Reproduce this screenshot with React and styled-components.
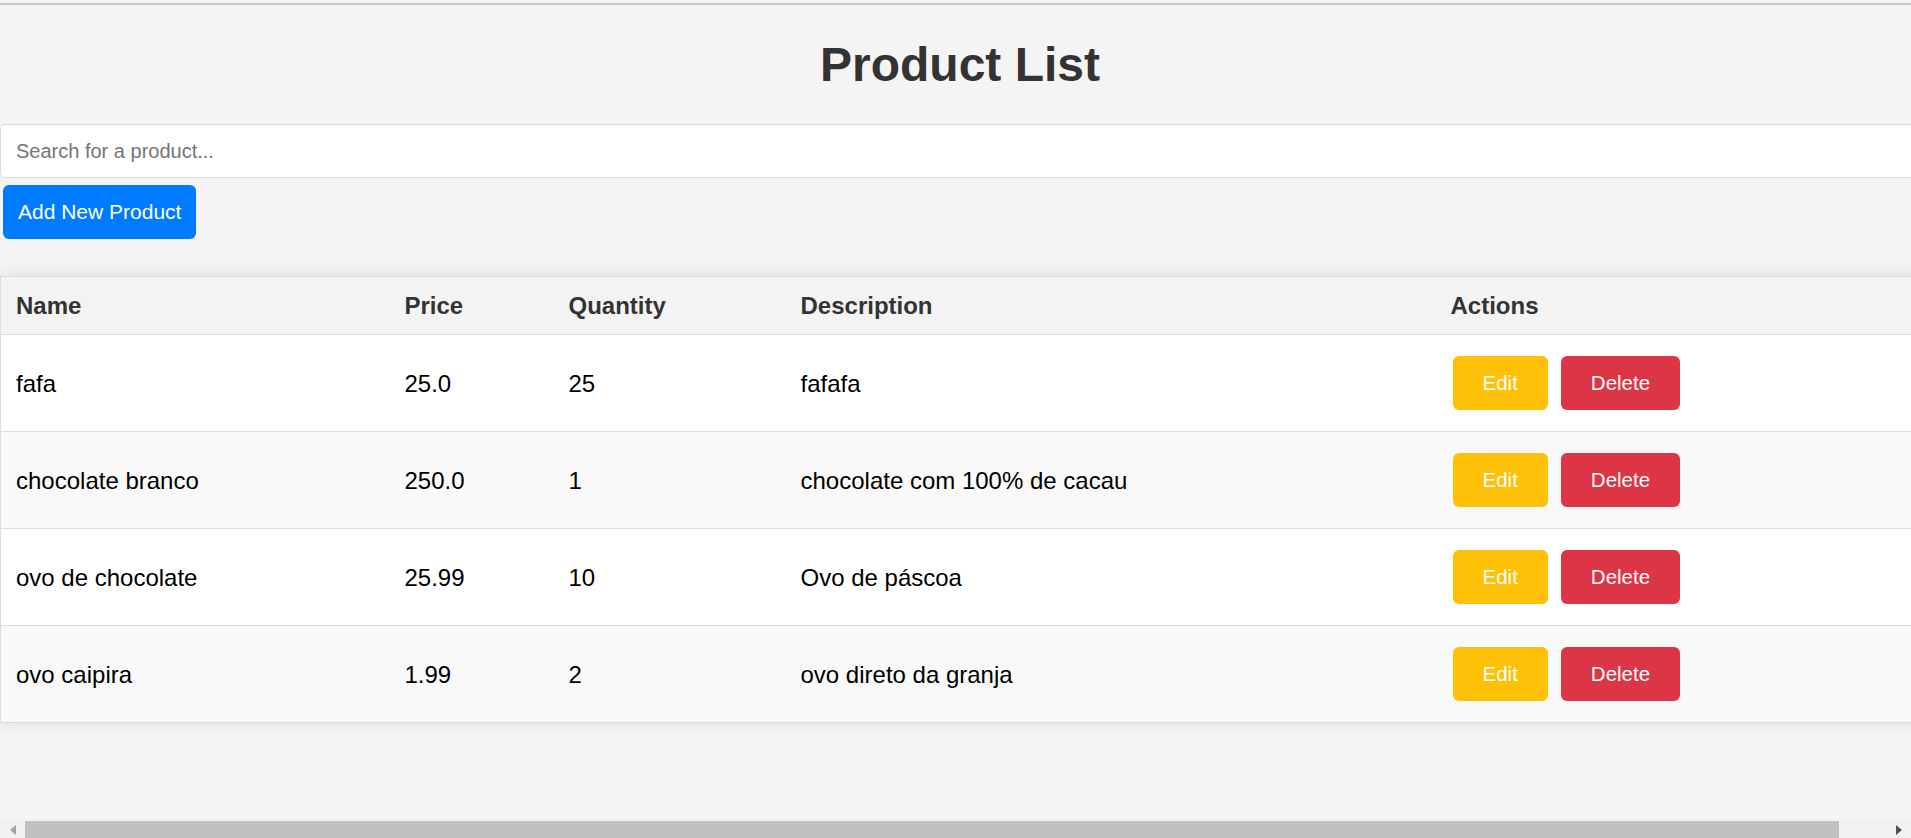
import React from "react";
import styled, { createGlobalStyle } from "styled-components";

const GlobalStyle = createGlobalStyle`
  html, body {
    margin: 0;
    padding: 0;
    overflow: hidden;
    background-color: #f4f4f4;
    font-family: "Liberation Sans", Arial, sans-serif;
  }
`;

const Page = styled.div`
  width: 1920px;
  min-height: 838px;
  margin-top: 3px;
  border-top: 2px solid #c6c6c6;
  background-color: #f4f4f4;
`;

const Title = styled.h1`
  margin: 32px 0;
  font-size: 48px;
  line-height: 55px;
  font-weight: bold;
  color: #333;
  text-align: center;
`;

const Search = styled.input`
  display: block;
  box-sizing: border-box;
  width: 1952px;
  height: 54px;
  margin: 0;
  padding: 0 15px;
  border: 1px solid #dcdcdc;
  border-radius: 6px;
  background-color: #fff;
  font-family: "Liberation Sans", Arial, sans-serif;
  font-size: 20px;
  color: #222;
  outline: none;

  &::placeholder {
    color: #757575;
  }
`;

const AddButton = styled.button`
  display: block;
  box-sizing: border-box;
  height: 54px;
  margin: 7px 0 0 3px;
  padding: 0 15px;
  border: none;
  border-radius: 6px;
  background-color: #007bff;
  color: #fff;
  font-family: "Liberation Sans", Arial, sans-serif;
  font-size: 21px;
  cursor: pointer;
`;

const Table = styled.table`
  width: 1978px;
  margin-top: 37px;
  table-layout: fixed;
  border-collapse: collapse;
  border: 1px solid #dcdcdc;
  background-color: #fff;
  box-shadow: 0 0 15px rgba(0, 0, 0, 0.1);
`;

const Col = styled.col`
  width: ${(p) => p.$w}px;
`;

const Th = styled.th`
  padding: 15px;
  text-align: left;
  font-size: 24px;
  line-height: 27px;
  font-weight: bold;
  color: #333;
  background-color: #f3f3f3;
  border-bottom: 1px solid #dcdcdc;
`;

const Row = styled.tr`
  background-color: ${(p) => (p.$even ? "#f9f9f9" : "#fff")};
  border-bottom: 1px solid #dcdcdc;
`;

const Td = styled.td`
  padding: 15px;
  font-size: 24px;
  line-height: 27px;
  color: #000;
  vertical-align: middle;
`;

const Actions = styled.div`
  display: flex;
  gap: 13px;
  padding: 6px 0 6px 2px;
`;

const ActionButton = styled.button`
  box-sizing: border-box;
  height: 54px;
  padding: 0 30px;
  border: none;
  border-radius: 6px;
  background-color: ${(p) => (p.$danger ? "#dc3545" : "#ffc107")};
  color: #fff;
  font-family: "Liberation Sans", Arial, sans-serif;
  font-size: 20.5px;
  cursor: pointer;
`;

const Scrollbar = styled.div`
  position: fixed;
  left: 0;
  right: 0;
  bottom: 0;
  height: 19px;
  display: flex;
  align-items: flex-end;
  background-color: #f1f1f1;
`;

const Arrow = styled.div`
  width: 25px;
  height: 17px;
  display: flex;
  align-items: center;
  justify-content: center;
`;

const Track = styled.div`
  flex: 1;
  height: 17px;
  display: flex;
`;

const Thumb = styled.div`
  width: 1814px;
  height: 17px;
  background-color: #c1c1c1;
`;

const products = [
  { name: "fafa", price: "25.0", quantity: 25, description: "fafafa" },
  { name: "chocolate branco", price: "250.0", quantity: 1, description: "chocolate com 100% de cacau" },
  { name: "ovo de chocolate", price: "25.99", quantity: 10, description: "Ovo de páscoa" },
  { name: "ovo caipira", price: "1.99", quantity: 2, description: "ovo direto da granja" },
];

const App = () => (
  <Page>
    <GlobalStyle />
    <Title>Product List</Title>
    <Search type="text" placeholder="Search for a product..." />
    <AddButton>Add New Product</AddButton>
    <Table>
      <colgroup>
        <Col $w={389} />
        <Col $w={164} />
        <Col $w={232} />
        <Col $w={650} />
        <Col $w={543} />
      </colgroup>
      <thead>
        <tr>
          <Th>Name</Th>
          <Th>Price</Th>
          <Th>Quantity</Th>
          <Th>Description</Th>
          <Th>Actions</Th>
        </tr>
      </thead>
      <tbody>
        {products.map((p, i) => (
          <Row key={p.name} $even={i % 2 === 1}>
            <Td>{p.name}</Td>
            <Td>{p.price}</Td>
            <Td>{p.quantity}</Td>
            <Td>{p.description}</Td>
            <Td>
              <Actions>
                <ActionButton>Edit</ActionButton>
                <ActionButton $danger>Delete</ActionButton>
              </Actions>
            </Td>
          </Row>
        ))}
      </tbody>
    </Table>
    <Scrollbar>
      <Arrow>
        <svg width="6" height="10" viewBox="0 0 6 10">
          <path d="M6 0 L0 5 L6 10 Z" fill="#a3a3a3" />
        </svg>
      </Arrow>
      <Track>
        <Thumb />
      </Track>
      <Arrow>
        <svg width="6" height="10" viewBox="0 0 6 10">
          <path d="M0 0 L6 5 L0 10 Z" fill="#505050" />
        </svg>
      </Arrow>
    </Scrollbar>
  </Page>
);

export default App;
